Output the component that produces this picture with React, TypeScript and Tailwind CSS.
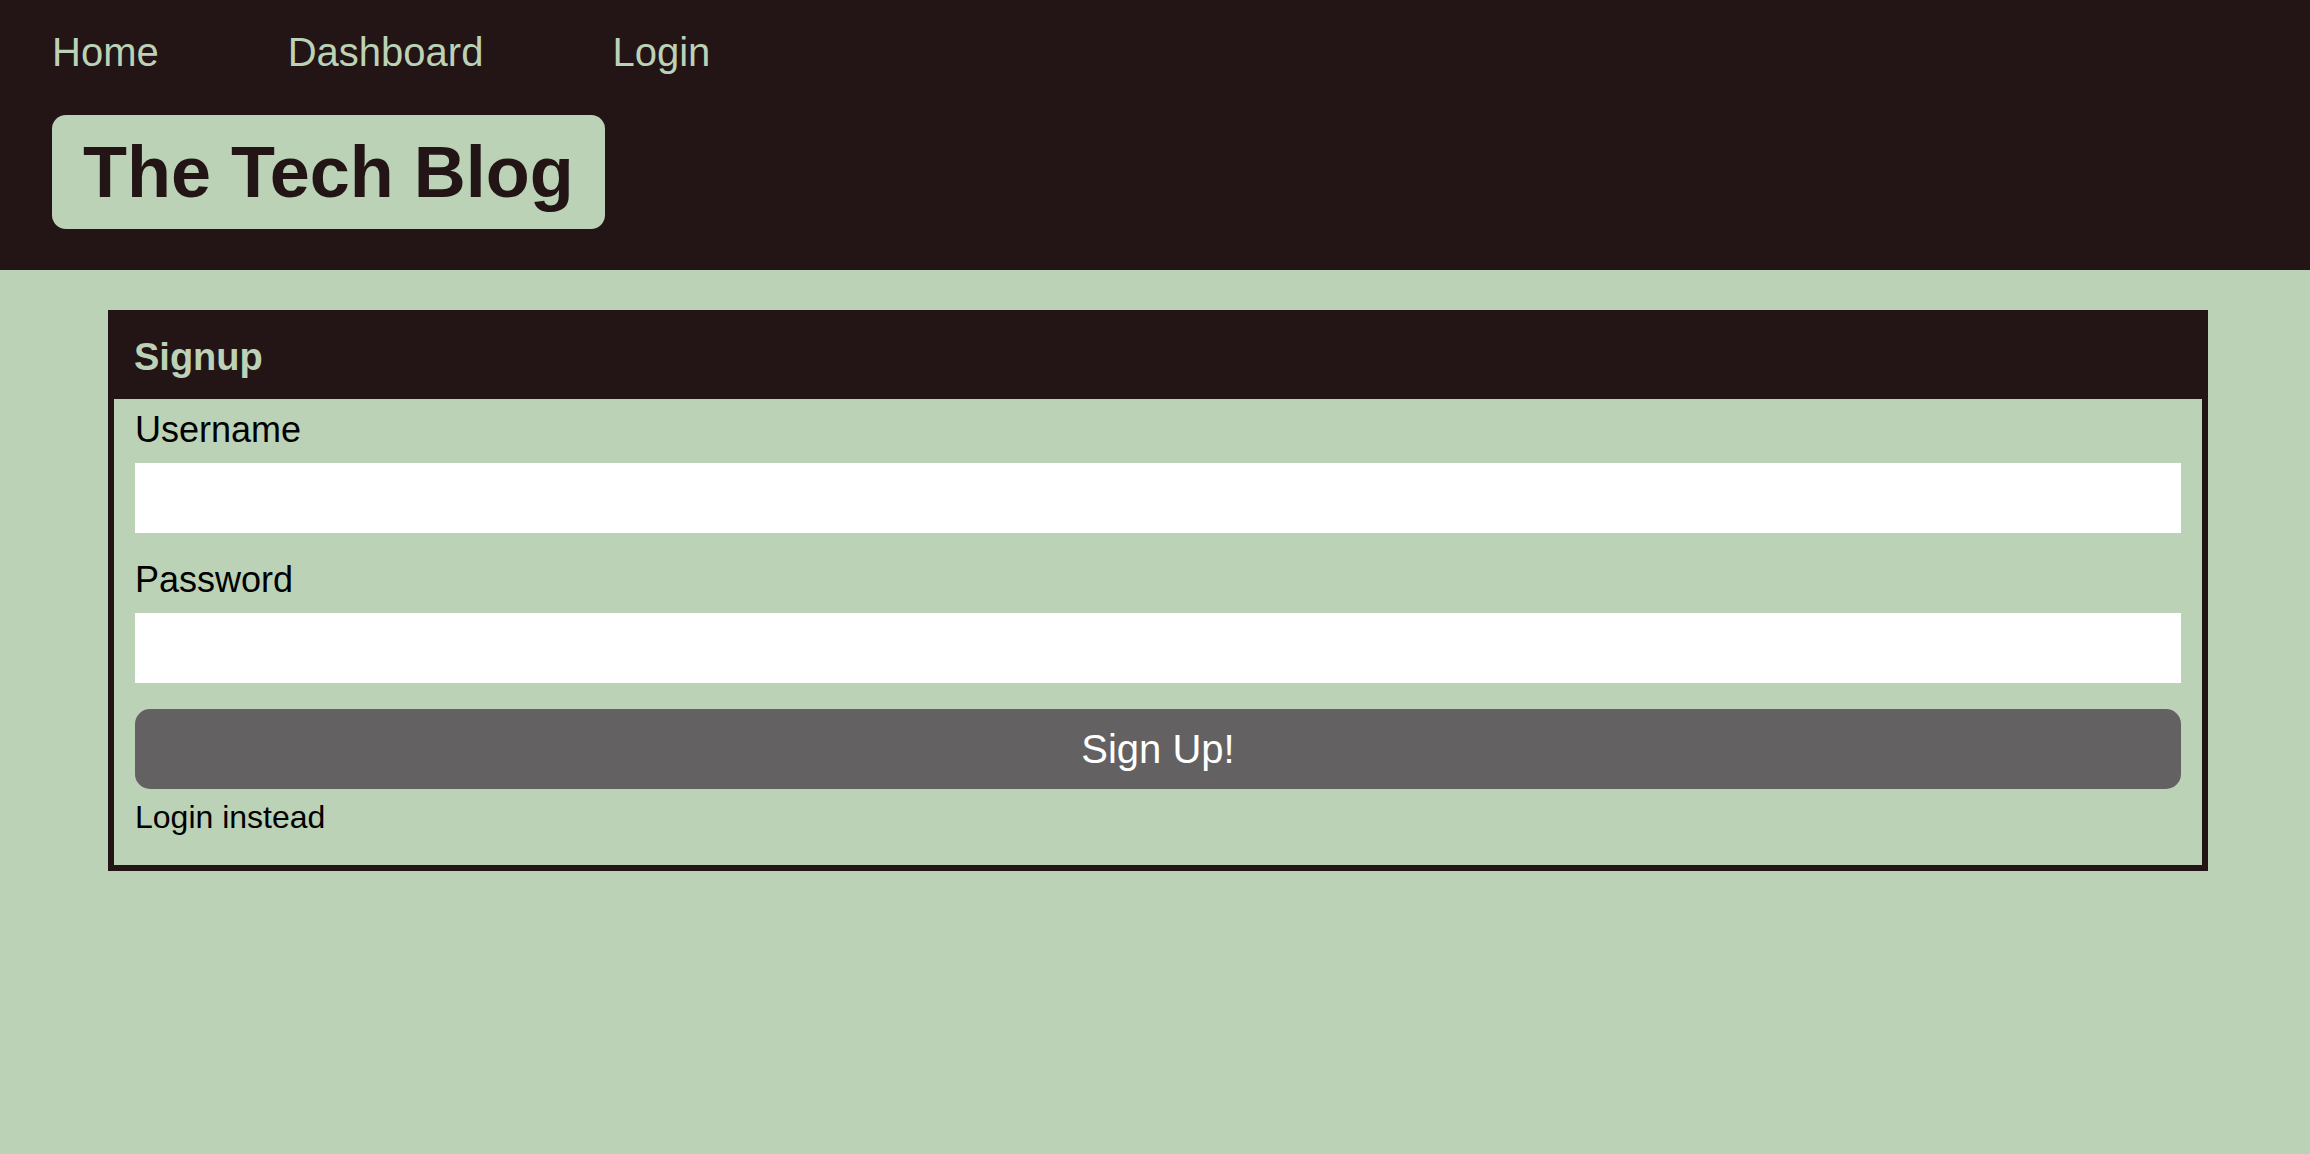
const NAV = ["Home", "Dashboard", "Login"];

export default function App() {
  return (
    <div className="min-h-screen bg-[#bbd2b6] font-['Liberation_Sans',Arial,sans-serif]">
      <header className="bg-[#231415] pl-[52px] pt-[32px] pb-[41px]">
        <nav className="flex gap-[129px] text-[40px] leading-[40px] text-[#bbd2b6]">
          {NAV.map((item) => (
            <a key={item} href="#">
              {item}
            </a>
          ))}
        </nav>
        <div className="mt-[43px] inline-block rounded-[14px] bg-[#bbd2b6] px-[31px] py-[16px]">
          <h1 className="text-[72px] font-bold leading-[82px] text-[#231415]">The Tech Blog</h1>
        </div>
      </header>

      <main className="pt-[40px]">
        <div className="ml-[108px] w-[2100px] border-[6px] border-[#231415]">
          <div className="bg-[#231415] px-[20px] pt-[21px] pb-[22px]">
            <h2 className="text-[38px] font-bold leading-[40px] text-[#bbd2b6]">Signup</h2>
          </div>
          <form className="flex flex-col px-[21px] pt-[10px] pb-[29px] text-black">
            <label className="text-[36px] leading-[41px]">Username</label>
            <input type="text" className="mt-[13px] h-[70px] w-full bg-white outline-none" />
            <label className="mt-[26px] text-[36px] leading-[41px]">Password</label>
            <input type="password" className="mt-[13px] h-[70px] w-full bg-white outline-none" />
            <button
              type="button"
              className="mt-[26px] h-[80px] w-full rounded-[15px] bg-[#636162] text-[40px] text-white"
            >
              Sign Up!
            </button>
            <a href="#" className="mt-[10px] text-[32px] leading-[37px] text-black">
              Login instead
            </a>
          </form>
        </div>
      </main>
    </div>
  );
}
